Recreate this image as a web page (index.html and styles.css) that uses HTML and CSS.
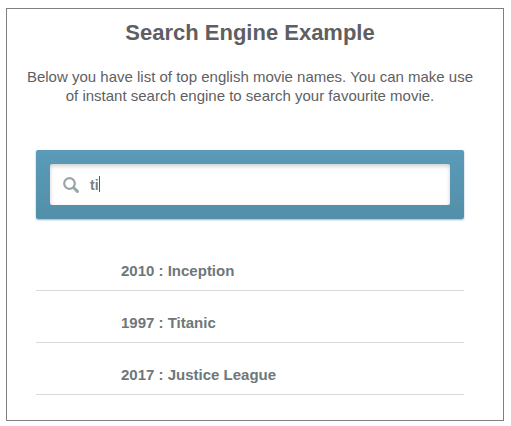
FILE: index.html
```html
<!DOCTYPE html>
<html lang="en">
<head>
  <meta charset="UTF-8">
  <meta name="viewport" content="width=device-width, initial-scale=1.0">
  <title>Search Engine Example</title>
  <link rel="stylesheet" href="styles.css">
</head>
<body>
  <main class="page">
    <h1>Search Engine Example</h1>
    <p class="intro">Below you have list of top english movie names. You can make use of instant search engine to search your favourite movie.</p>

    <div class="bar">
      <svg class="search-icon" viewBox="0 0 16 16" aria-hidden="true">
        <circle cx="6.5" cy="6.5" r="5.3" fill="none" stroke="#98a6a8" stroke-width="2.2"/>
        <path d="M11 11L14.4 14.4" stroke="#98a6a8" stroke-width="3" stroke-linecap="round"/>
      </svg>
      <input type="text" id="search" value="ti" aria-label="Search movies" autocomplete="off">
      <span class="caret"></span>
    </div>

    <ul class="movies">
      <li><a href="#">2010 : Inception</a></li>
      <li><a href="#">1997 : Titanic</a></li>
      <li><a href="#">2017 : Justice League</a></li>
    </ul>
  </main>
</body>
</html>
```
FILE: styles.css
```css
* {
  box-sizing: border-box;
}

body {
  margin: 0;
  background: #fff;
  font-family: "Liberation Sans", Arial, sans-serif;
  font-size: 15px;
  color: #5f5f63;
}

.page {
  margin: 8px 7px 5px 6px;
  padding: 10px 10px 25px 0;
  border: 1px solid #808083;
}

h1 {
  margin: 0;
  font-size: 22px;
  line-height: 28px;
  text-align: center;
}

.intro {
  margin: 20px 0 0;
  padding: 0 16px;
  line-height: 19px;
  text-align: center;
}

/* Search bar */
.bar {
  position: relative;
  margin: 45px 29px 0;
  padding: 14px;
  background: linear-gradient(#5b9bb8, #528fa9);
  border-radius: 2px;
  box-shadow: 0 1px 2px rgba(60, 110, 150, 0.5);
}

.bar input {
  display: block;
  width: 100%;
  height: 41px;
  padding: 0 14px 0 40px;
  border: 0;
  border-radius: 2px;
  outline: none;
  background: #fff;
  box-shadow: inset 0 2px 4px rgba(0, 0, 0, 0.2);
  color: #788084;
  font: bold 14px "Liberation Sans", Arial, sans-serif;
}

.search-icon {
  position: absolute;
  left: 27px;
  top: 27px;
  width: 16px;
  height: 16px;
}

.caret {
  position: absolute;
  left: 63px;
  top: 26px;
  width: 1px;
  height: 16px;
  background: #4d5f6b;
}

/* Movie list */
.movies {
  margin: 20px 29px 0;
  padding: 0;
  list-style: none;
}

.movies li {
  padding: 23px 0 10px 85px;
  border-bottom: 1px solid #d9d9d9;
  line-height: 18px;
}

.movies a {
  color: #6e777a;
  font-weight: bold;
  text-decoration: none;
}
```
